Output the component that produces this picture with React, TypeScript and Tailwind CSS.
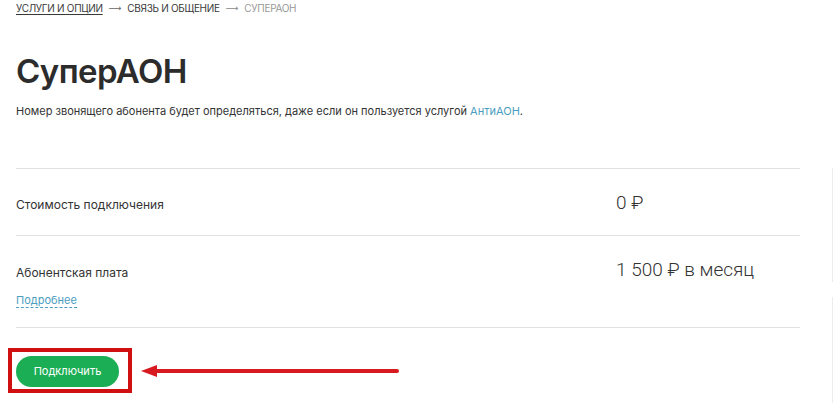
import React from 'react';

const rows = [
  { label: 'Стоимость подключения', value: '0 ₽', more: false },
  { label: 'Абонентская плата', value: '1 500 ₽ в месяц', more: true },
];

export default function App() {
  return (
    <div className="w-[833px] h-[403px] overflow-hidden bg-white flex font-['Inter',sans-serif] text-[#333]">
      <div className="w-[832px] flex flex-col">
        {/* Breadcrumbs */}
        <nav className="flex items-center gap-[6px] pl-4 pt-[2px] h-[14px] text-[10px] leading-[12px] uppercase tracking-[-0.3px]">
          <span className="text-[#3a3a3a] underline underline-offset-2">Услуги и опции</span>
          <span className="text-[#666] font-['DejaVu_Sans',sans-serif] text-[9px]">⟶</span>
          <span className="text-[#3a3a3a]">Связь и общение</span>
          <span className="text-[#888] font-['DejaVu_Sans',sans-serif] text-[9px]">⟶</span>
          <span className="text-[#999]">СуперАОН</span>
        </nav>

        <h1 className="pl-4 mt-[37px] text-[33px] leading-[40px] font-semibold text-[#2c2c2c] tracking-[-0.6px]">
          СуперАОН
        </h1>

        <p className="pl-4 mt-[13px] text-[11px] leading-[14px] text-[#333]">
          Номер звонящего абонента будет определяться, даже если он пользуется услугой{' '}
          <span className="text-[#4b9dc0]">АнтиАОН</span>.
        </p>

        {/* Tariff rows */}
        <div className="mt-[50px] ml-4 w-[784px] border-t border-[#e2e2e2]">
          {rows.map(row => (
            <div
              key={row.label}
              className={`grid grid-cols-[600px_1fr] border-b border-[#e2e2e2] ${row.more ? 'h-[92px]' : 'h-[67px]'}`}
            >
              <div className={row.more ? 'pt-[29px]' : 'pt-[28px]'}>
                <div className="text-[12px] leading-[16px] text-[#333]">{row.label}</div>
                {row.more && (
                  <span className="inline-block mt-[12px] text-[11px] leading-[14px] text-[#4b9dc0] border-b border-dashed border-[#4b9dc0]">
                    Подробнее
                  </span>
                )}
              </div>
              <div className="pt-[22px] font-['Roboto',sans-serif] text-[19px] leading-[24px] font-light text-[#333]">
                {row.value}
              </div>
            </div>
          ))}
        </div>

        {/* Connect button with annotation */}
        <div className="flex items-center mt-[20px] ml-2">
          <div className="border-4 border-[#d01010] pl-1 pr-[9px] pt-1 pb-[2px]">
            <button className="w-[103px] h-[31px] rounded-full bg-[#1cae55] text-white text-[11px] leading-none">
              Подключить
            </button>
          </div>
          <svg width="258" height="14" viewBox="0 0 258 14" className="ml-[9px]">
            <polygon points="0,7 16,1 16,13" fill="#d71920" />
            <line x1="12" y1="7" x2="256" y2="7" stroke="#d71920" strokeWidth="4" strokeLinecap="round" />
          </svg>
        </div>
      </div>

      {/* Right edge line */}
      <div className="w-px flex flex-col pt-[168px]">
        <div className="h-[114px] bg-[#ececec]" />
        <div className="h-[15px]" />
        <div className="flex-1 bg-[#ececec]" />
      </div>
    </div>
  );
}
